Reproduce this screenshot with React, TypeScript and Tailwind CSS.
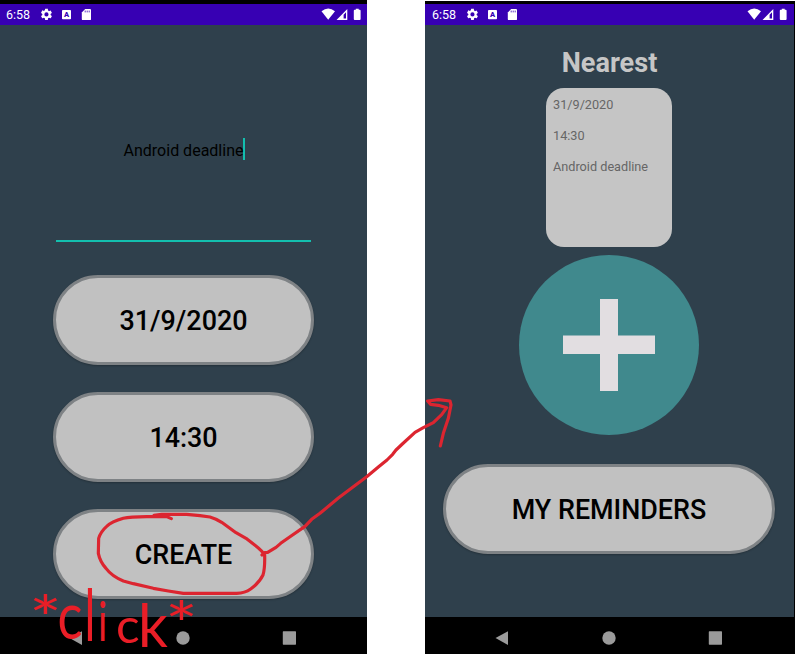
import type { ReactNode } from "react";

function StatusBar() {
  return (
    <div className="flex h-[21px] w-full shrink-0 items-center bg-[#3700b3] pl-[6px] text-white">
      <span className="w-[34px] pt-px text-[12.5px] leading-[20px]">6:58</span>
      <svg className="h-[21px] w-[326px]" viewBox="40 4 326 21" fill="white">
        <g transform="translate(39.5 7.5) scale(.58)">
          <path d="M19.14 12.94c.04-.3.06-.61.06-.94s-.02-.64-.07-.94l2.03-1.58a.49.49 0 0 0 .12-.61l-1.92-3.32a.49.49 0 0 0-.59-.22l-2.39.96a7 7 0 0 0-1.62-.94l-.36-2.54A.48.48 0 0 0 13.92 2h-3.84a.47.47 0 0 0-.47.41l-.36 2.54c-.59.24-1.13.57-1.62.94l-2.39-.96a.48.48 0 0 0-.59.22L2.74 8.87a.47.47 0 0 0 .12.61l2.03 1.58a6 6 0 0 0 0 1.88l-2.03 1.58a.49.49 0 0 0-.12.61l1.92 3.32c.12.22.37.29.59.22l2.39-.96c.5.38 1.03.7 1.62.94l.36 2.54c.05.24.24.41.48.41h3.84c.24 0 .44-.17.47-.41l.36-2.54a7 7 0 0 0 1.62-.94l2.39.96c.22.08.47 0 .59-.22l1.92-3.32a.47.47 0 0 0-.12-.61zM12 15.6a3.6 3.6 0 1 1 0-7.2 3.6 3.6 0 0 1 0 7.2" />
        </g>
        <rect x="62" y="10" width="9" height="9.2" rx=".8" />
        <text x="66.5" y="17.2" textAnchor="middle" fontSize="7.5" fontWeight="900" fill="#3700b3">A</text>
        <path d="M85.2 9H90q1 0 1 1v9.2q0 .9-1 .9h-7.2q-1 0-1-.9v-6.8Z" />
        <path d="M85.2 10.6v1.8M87.2 10.6v1.8M89.2 10.6v1.8" stroke="#3700b3" strokeWidth=".8" />
        <path d="M321.5 11.2Q328.2 5.9 335 11.2L328.2 19.8Z" />
        <path fillRule="evenodd" d="M336.5 20 347.3 9v11ZM343.6 14.7v3.8H346v-6.3Z" />
        <path d="M355.8 9.8V8.7h2.9v1.1h1q.9 0 .9.9v8.4q0 .9-.9.9h-5q-.9 0-.9-.9v-8.4q0-.9.9-.9Z" />
      </svg>
    </div>
  );
}

function NavBar() {
  return (
    <div className="h-[37px] w-full shrink-0 bg-black">
      <svg className="h-[37px] w-[366px]" viewBox="0 617 366 37" fill="#9b9b9b">
        <path d="M69.5 638 82 631.2v13.8Z" />
        <circle cx="183" cy="638" r="6.7" />
        <rect x="282.8" y="631.3" width="13.2" height="13.4" rx=".6" />
      </svg>
    </div>
  );
}

function Pill({ children, className }: { children: ReactNode; className: string }) {
  return (
    <button
      className={`flex h-[90px] shrink-0 items-center justify-center rounded-full border-[3px] border-[#7e8285] bg-[#c1c1c1] pt-[3px] text-[26.9px] font-medium text-black shadow-[0_1px_2px_rgba(0,0,0,0.25)] ${className}`}
    >
      {children}
    </button>
  );
}

const letters = [
  { ch: "*", x: 29, y: 641, size: 62, sx: 1.25 },
  { ch: "c", x: 57.5, y: 639, size: 63, sx: 0.83 },
  { ch: "l", x: 84.5, y: 641, size: 71, sx: 0.65 },
  { ch: "i", x: 98, y: 641, size: 55, sx: 0.7 },
  { ch: "c", x: 116, y: 643, size: 48, sx: 1.03 },
  { ch: "k", x: 138, y: 647, size: 60, sx: 0.98 },
  { ch: "*", x: 165, y: 647, size: 62, sx: 1.25 },
];

function Annotations() {
  return (
    <svg className="pointer-events-none absolute inset-0" width="796" height="654" viewBox="0 0 796 654">
      <g fill="none" stroke="#dc2530" strokeLinecap="round" strokeLinejoin="round">
        <path
          transform="translate(0 500) scale(.33333)"
          strokeWidth="9.5"
          d="M514 56 500 50 440 50Q390 50 370 55Q335 65 320 79Q302 95 296 115L295 160Q300 185 318 205Q335 228 370 243L400 251 460 265 505 273 550 280H710Q735 279 752 267Q778 248 789 225Q795 205 794 166Q787 153 765 136L738 115 708 98 665 67Q645 55 630 51L600 47 560 43H485L462 46"
        />
        <path
          transform="translate(250 380) scale(.33333)"
          strokeWidth="9.5"
          d="M36 525 44 518 53 517 78 502 92 490 120 470 165 439 185 418 210 400 265 354 350 290 385 261 411 240 428 223 438 210 457 192 495 157 520 143 550 128 575 104 590 83 565 76 542 73 533 63 565 59 600 63 603 75 595 115 580 160 571 198"
        />
      </g>
      <g className="font-[Lato,sans-serif]" fill="#ea1e27">
        {letters.map((l, i) => (
          <text key={i} fontSize={l.size} transform={`translate(${l.x} ${l.y}) scale(${l.sx} 1)`}>
            {l.ch}
          </text>
        ))}
      </g>
    </svg>
  );
}

export default function App() {
  return (
    <div className="relative flex h-[654px] w-[796px] justify-between overflow-hidden bg-white pr-px font-[Roboto,sans-serif]">
      <section className="flex h-full w-[367px] flex-col bg-black pt-[4px]">
        <StatusBar />
        <main className="flex h-[592px] w-full flex-col items-center bg-[#2f404c]">
          <div className="mr-px mt-[50px] flex h-[167px] w-[255px] justify-center border-b-2 border-[#13bfae] pt-[63px]">
            <div className="ml-[3px] flex h-[22px] items-center border-r-2 border-[#13bfae] text-[16px] text-black">
              <span className="pt-[3px]">Android deadline</span>
            </div>
          </div>
          <div className="mt-[33px] flex flex-col gap-[27px]">
            <Pill className="w-[261px]">31/9/2020</Pill>
            <Pill className="w-[261px]">14:30</Pill>
            <Pill className="w-[261px]">CREATE</Pill>
          </div>
        </main>
        <NavBar />
      </section>

      <section className="mt-px flex h-[653px] w-[370px] flex-col bg-black pr-px pt-[3px]">
        <div className="w-full bg-[#3700b3] pl-px">
          <StatusBar />
        </div>
        <main className="flex h-[592px] w-full flex-col items-center bg-[#2f404c] pr-px">
          <h1 className="ml-px mt-[20px] h-[43px] text-[27.1px] font-bold leading-[37px] text-[#c6c6c6]">Nearest</h1>
          <div className="flex h-[159px] w-[126px] flex-col gap-[15px] rounded-[18px] bg-[#c5c5c5] pl-[7px] pt-[9px] text-[12.7px] leading-[16px] text-[#666666]">
            <p>31/9/2020</p>
            <p>14:30</p>
            <p>Android deadline</p>
          </div>
          <button className="mt-[8px] flex h-[180px] w-[180px] shrink-0 items-center justify-center rounded-full bg-[#40898d]">
            <svg width="92" height="92" viewBox="0 0 92 92" fill="#e2dee1">
              <path d="M37 0h18v36.5h37V55H55v37H37V55H0V36.5h37Z" />
            </svg>
          </button>
          <Pill className="mt-[29px] w-[332px]">MY REMINDERS</Pill>
        </main>
        <div className="pl-px">
          <NavBar />
        </div>
      </section>
      <Annotations />
    </div>
  );
}
